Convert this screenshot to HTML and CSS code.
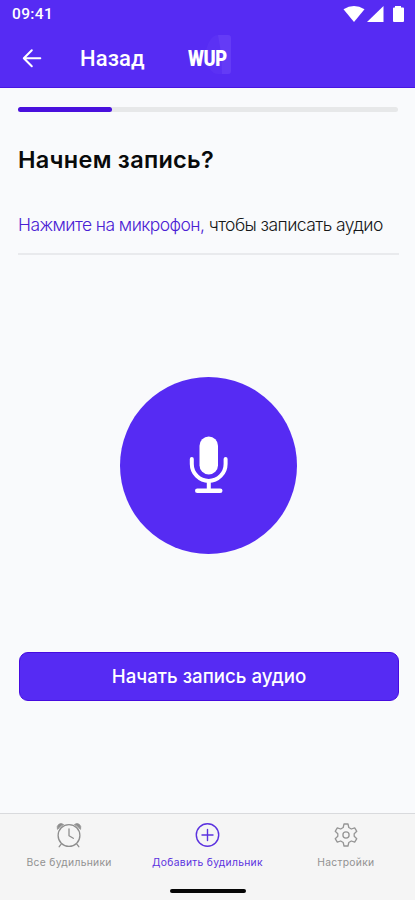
FILE: index.html
```html
<!DOCTYPE html>
<html lang="ru">
<head>
<meta charset="utf-8">
<title>Запись аудио</title>
<link rel="stylesheet" href="styles.css">
</head>
<body>
<div class="screen">
  <header class="header">
    <div class="status">
      <span class="time">09:41</span>
      <svg class="status-icons" width="62" height="17" viewBox="0 0 62 17" fill="#fff">
        <path d="M0.500 3.200Q11-3 21.500 3.200L11 16Z"/>
        <path d="M24 16L40.500 0V16Z"/>
        <path d="M52 0h6v1.500H60q1 0 1 1V15q0 1-1 1H51q-1 0-1-1V2.500q0-1 1-1h1Z"/>
      </svg>
    </div>
    <div class="appbar">
      <svg class="back" width="20" height="20" viewBox="0 0 20 20" fill="none" stroke="#fff" stroke-width="2" stroke-linecap="round" stroke-linejoin="round">
        <path d="M18.300 10.200H2M9.800 2.200L1.800 10.200L9.800 18.200"/>
      </svg>
      <span class="back-label">Назад</span>
      <div class="logo">
        <svg width="43" height="40" viewBox="0 0 43 40">
          <path d="M14 27L20 9Q24 0 30 0H40Q43 0 43 3V36Q43 39 40 39H30Q25 39 22 34Z" fill="#5b31f4"/>
          <path d="M30 0H40Q43 0 43 3V36Q43 39 40 39H34L33 18Z" fill="#643bf6"/>
        </svg>
        <span class="logo-text">WUP</span>
      </div>
    </div>
  </header>
  <main class="content">
    <div class="progress"><div class="progress-fill"></div></div>
    <h1 class="title">Начнем запись?</h1>
    <p class="hint"><span class="accent">Нажмите на микрофон,</span> чтобы записать аудио</p>
    <div class="mic">
      <svg width="40" height="60" viewBox="0 0 40 60" fill="none" stroke="#fff" stroke-width="4" stroke-linecap="round">
        <rect x="10.500" y="0.500" width="18.500" height="38" rx="9.250" fill="#fff" stroke="none"/>
        <path d="M2.800 23V28A16.900 16.900 0 0 0 36.600 28V23M19.800 45V54.500"/>
        <path d="M8.300 54.700H31.200" stroke-width="4.600"/>
      </svg>
    </div>
    <div class="button">Начать запись аудио</div>
  </main>
  <nav class="tabs">
    <div class="tab">
      <svg width="28" height="28" viewBox="0 0 28 28" fill="none" stroke="#8e8e8e" stroke-width="1.300" stroke-linecap="round" stroke-linejoin="round">
        <circle cx="14" cy="14.500" r="10.900"/>
        <path d="M14 8V14.800L18.300 17.300M6.200 23.200L4.200 25.700M21.800 23.200L23.800 25.700"/>
        <path d="M2.300 8Q1.500 5 3.800 3.300Q6 1.700 8.300 3.300ZM25.700 8Q26.500 5 24.200 3.300Q22 1.700 19.700 3.300Z" fill="#8e8e8e" stroke-width=".8"/>
      </svg>
      <span class="label">Все будильники</span>
    </div>
    <div class="tab active">
      <svg width="28" height="28" viewBox="0 0 28 28" fill="none" stroke="#5b32df" stroke-width="1.400" stroke-linecap="round">
        <circle cx="14.500" cy="14" r="11.200"/><path d="M14.500 8.500V19.500M9 14H20"/>
      </svg>
      <span class="label">Добавить будильник</span>
    </div>
    <div class="tab">
      <svg width="28" height="28" viewBox="0 0 28 28" fill="none" stroke="#959595" stroke-width="1.300" stroke-linejoin="round">
        <path d="M12 3H16L16.800 6.500L19.300 8L22.700 6.800L24.800 10.300L22.200 12.700V15.300L24.800 17.700L22.700 21.200L19.300 20L16.800 21.500L16 25H12L11.200 21.500L8.700 20L5.300 21.200L3.200 17.700L5.800 15.300V12.700L3.200 10.300L5.300 6.800L8.700 8L11.200 6.500Z"/>
        <circle cx="14" cy="14" r="3.100"/>
      </svg>
      <span class="label">Настройки</span>
    </div>
    <div class="home"></div>
  </nav>
</div>
</body>
</html>
```
FILE: styles.css
```css
* { box-sizing: border-box; }
body { margin: 0; font-family: Inter, "Liberation Sans", sans-serif; }
.screen { width: 415px; height: 900px; display: flex; flex-direction: column; background: #f9fafc; overflow: hidden; }
.header { height: 88px; background: #562bf3; border-bottom: 1px solid #4716e3; color: #fff; }
.status { height: 28px; display: flex; justify-content: space-between; padding: 6px 10px 0 12px; }
.time { font: 500 15.500px/17px Roboto, sans-serif; letter-spacing: .35px; }
.appbar { height: 59px; display: flex; align-items: center; padding-left: 22px; }
.back { flex: none; }
.back-label { width: 108px; margin-left: 38px; font: 500 22px/28px Roboto, sans-serif; letter-spacing: .1px; white-space: nowrap; padding-top: 2px; }
.logo { position: relative; width: 43px; height: 40px; margin-top: -6px; }
.logo svg { display: block; }
.logo-text { position: absolute; left: 0; top: 14px; font: 900 21.500px/20px Roboto, sans-serif; letter-spacing: -.4px; transform: scaleX(.85); transform-origin: left; }
.content { height: 725px; display: flex; flex-direction: column; padding: 19px 16px 0 18px; }
.progress { width: 380px; height: 5px; border-radius: 3px; background: #e7e8e9; flex: none; }
.progress-fill { width: 94px; height: 5px; border-radius: 3px; background: #4910dd; }
.title { margin: 33px 0 0; font-size: 23.500px; line-height: 30px; font-weight: 600; letter-spacing: .28px; color: #090a0b; white-space: nowrap; }
.hint { width: 381px; height: 45px; margin: 35px 0 0; font-size: 17.500px; line-height: 30px; font-weight: 300; letter-spacing: -.565px; color: #161718; border-bottom: 2px solid #e9eaed; white-space: nowrap; }
.accent { color: #4a20d4; }
.mic { width: 177px; height: 177px; margin: 122px 0 0 102px; border-radius: 50%; background: #562bf3; display: flex; align-items: center; justify-content: center; flex: none; }
.button { width: 380px; height: 49px; margin: 98px 0 0 1px; border: 1px solid #460be0; border-radius: 9px; background: #562bf3; color: #fff; font-size: 18.700px; line-height: 48px; font-weight: 500; text-align: center; white-space: nowrap; }
.tabs { position: relative; height: 87px; display: flex; background: #f5f5f5; border-top: 1px solid #d9dadd; }
.tab { flex: 1 1 0; min-width: 0; display: flex; flex-direction: column; align-items: center; padding-top: 7px; color: #929292; }
.label { margin-top: 6px; font-size: 10.300px; line-height: 14px; letter-spacing: .3px; white-space: nowrap; }
.active { color: #5b32df; }
.home { position: absolute; left: 170px; top: 75px; width: 76px; height: 4px; border-radius: 2px; background: #050505; }
```
